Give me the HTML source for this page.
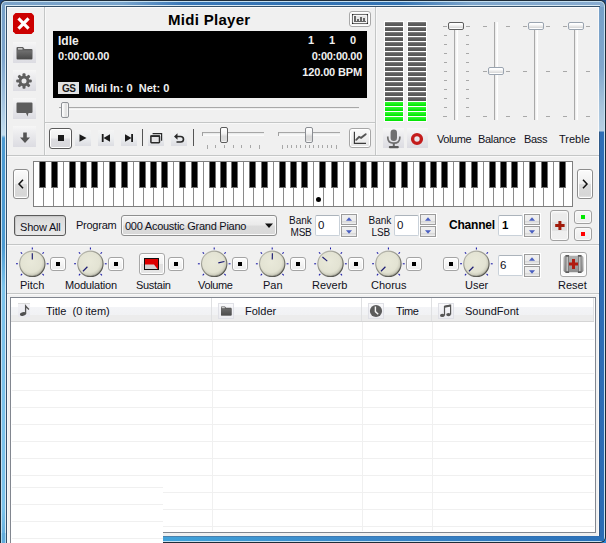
<!DOCTYPE html>
<html><head><meta charset="utf-8">
<style>
*{box-sizing:border-box;margin:0;padding:0}
html,body{width:606px;height:543px;overflow:hidden;background:#f0f0f0}
body{position:relative;font-family:"Liberation Sans",sans-serif;font-size:11px;color:#000}
.a{position:absolute}
.t{position:absolute;white-space:nowrap;line-height:1}
.hl{position:absolute;height:1px;background:#c4c6c6}
.vl{position:absolute;width:1px;background:#c4c6c6}
.sbtn{position:absolute;width:23px;height:21px;background:linear-gradient(#f6f6f6,#e9e9ec 45%,#dcdce2)}
.tb{position:absolute;width:16px;height:16px;background:linear-gradient(#f4f4f4,#eceef0 50%,#dcdde2)}
.rb{position:absolute;border:1px solid #9a9a9a;border-radius:3px;background:linear-gradient(#fbfbfb,#f1f1f1 50%,#e4e4e4 51%,#dedede)}
.vu{position:absolute;width:20px;height:101px;background:#fff}
.seg{position:absolute;left:1px;width:18px;height:4px;background:linear-gradient(#8a8a8a,#5c5c5c 40%,#585858)}
.seg.g{background:linear-gradient(#30ff30,#00e000)}
.groove{position:absolute;width:4px;background:linear-gradient(90deg,#a9a9a9 0,#a9a9a9 1px,#e6e6e6 1px,#fff 3px,#fff)}
.vh{position:absolute;width:16px;height:8px;border:1px solid #8a8d90;border-radius:2px;background:linear-gradient(#fff,#fff 20%,#e5e5e5 60%,#d9d9d9 80%,#fff 81%)}
.tk{position:absolute;height:1px;background:#a8a8a8}
.lbl{position:absolute;white-space:nowrap;line-height:1;font-size:11px;color:#101020}
</style></head><body>

<!-- ===== window frame ===== -->
<div class="a" style="left:0;top:0;width:606px;height:10px;background:#24508a"></div>
<div class="a" style="left:596px;top:533px;width:10px;height:10px;background:#2a88d8"></div>
<div class="a" style="left:0;top:0;width:606px;height:543px;background:#1e2c38;border-radius:6px 6px 6px 0"></div>
<div class="a" style="left:1px;top:1px;width:604px;height:541px;background:#c6e0f0;border-radius:5px 5px 5px 0"></div>
<div class="a" style="left:2px;top:2px;width:602px;height:539px;border-radius:4px 4px 4px 0;background:linear-gradient(90deg,#7aa2c8 0,#78a4cc 20%,#3a78b8 30%,#3272b2 50%,#3474b4 66%,#7ea6cc 78%,#88acd0 100%)"></div>
<!-- left side strip colours -->
<div class="a" style="left:2px;top:7px;width:3px;height:534px;background:linear-gradient(#76a0c8 0,#7ca4cc 50px,#a4c4e0 95px,#c4def0 128px,#4b9ad2 131px,#4b9ad2 240px,#7cc4ec 280px,#7cc4ec 500px,#62acdc 534px)"></div>
<!-- right side strip -->
<div class="a" style="left:600px;top:7px;width:4px;height:534px;background:linear-gradient(#76a0c8 0,#80a6cc 60px,#a8c4dc 100px,#b8d0e4 124px,#2e6eb6 125px,#2c6cb4 534px)"></div>
<!-- bottom strip -->
<div class="a" style="left:2px;top:537px;width:602px;height:4px;background:linear-gradient(90deg,#58b0e0,#40a0d8 30%,#3a86c8 60%,#2a70b8)"></div>
<div class="a" style="left:5px;top:5px;width:595px;height:532px;background:#d8eaf4"></div>
<div class="a" style="left:6px;top:6px;width:594px;height:531px;background:#34506a"></div>
<div class="a" style="left:7px;top:7px;width:592px;height:529px;background:#f0f0f0;border-top:1px solid #fbfbfb;border-left:1px solid #f8f8f8;border-right:1px solid #fafafa"></div>

<div class="a" style="left:599px;top:7px;width:1px;height:530px;background:linear-gradient(#76a0c8 0,#80a6cc 60px,#a8c4dc 100px,#b8d0e4 124px,#2f5a8a 125px,#2a5486)"></div>
<div class="a" style="left:163px;top:536px;width:437px;height:1px;background:linear-gradient(90deg,#4a82ac,#3a78b4 50%,#2c6cb2)"></div>
<!-- ===== left sidebar ===== -->
<div class="vl" style="left:44px;top:7px;height:148px"></div>
<div class="a" style="left:45px;top:7px;width:1px;height:148px;background:#f8f8f8"></div>
<svg class="a" style="left:13px;top:13px" width="21" height="21" viewBox="0 0 21 21">
 <path d="M2.5 0H18.5L21 2.5V18.5L18.5 21H2.5L0 18.5V2.5Z" fill="#cc0000"/>
 <path d="M6.6 6.6L14.4 14.4M14.4 6.6L6.6 14.4" stroke="#fff" stroke-width="3.2" stroke-linecap="square"/>
</svg>
<div class="sbtn" style="left:13px;top:42px"></div>
<svg class="a" style="left:16px;top:46px" width="17" height="14" viewBox="0 0 17 14">
 <path d="M1.5 1H7L8.5 3H15.5Q16.5 3 16.5 4V12.5Q16.5 13.5 15.5 13.5H1.5Q0.5 13.5 0.5 12.5V2Q0.5 1 1.5 1Z" fill="#5e5e5e"/>
 <rect x="2" y="2.2" width="4.5" height="1.3" fill="#ddd"/>
 <rect x="1" y="4.5" width="15" height="8.5" fill="url(#fg)"/>
 <defs><linearGradient id="fg" x1="0" y1="0" x2="0" y2="1"><stop offset="0" stop-color="#707070"/><stop offset="1" stop-color="#4a4a4a"/></linearGradient></defs>
</svg>
<div class="sbtn" style="left:13px;top:70px"></div>
<svg class="a" style="left:15px;top:72px" width="18" height="18" viewBox="0 0 18 18">
 <g fill="#5e5e5e" transform="translate(9,9)">
  <circle r="5.4"/>
  <rect x="-1.5" y="-7.8" width="3" height="15.6" rx="1"/>
  <rect x="-1.5" y="-7.8" width="3" height="15.6" rx="1" transform="rotate(45)"/>
  <rect x="-1.5" y="-7.8" width="3" height="15.6" rx="1" transform="rotate(90)"/>
  <rect x="-1.5" y="-7.8" width="3" height="15.6" rx="1" transform="rotate(135)"/>
 </g>
 <circle cx="9" cy="9" r="2.5" fill="#eaeaec"/>
</svg>
<div class="sbtn" style="left:13px;top:98px"></div>
<svg class="a" style="left:16px;top:102px" width="17" height="15" viewBox="0 0 17 15">
 <path d="M1.5 0.5H15.5Q16.5 0.5 16.5 1.5V10Q16.5 11 15.5 11H12.5L11.5 14.5L10 11H1.5Q0.5 11 0.5 10V1.5Q0.5 0.5 1.5 0.5Z" fill="#5c5c5c"/>
</svg>
<div class="sbtn" style="left:13px;top:126px"></div>
<svg class="a" style="left:19px;top:132px" width="12" height="12" viewBox="0 0 12 12">
 <path d="M4.2 0.5H7.8V5.5H11L6 11L1 5.5H4.2Z" fill="#555"/>
</svg>

<!-- ===== top centre ===== -->
<div class="t" style="left:168px;top:12px;font-size:15px;font-weight:bold;color:#000;letter-spacing:0.3px">Midi Player</div>
<div class="rb" style="left:349px;top:11px;width:22px;height:16px;border-color:#a8a8a8;background:#f4f4f4;box-shadow:inset 0 0 0 1px #fff"></div>
<svg class="a" style="left:352px;top:14px" width="16" height="10" viewBox="0 0 16 10">
 <rect x="0.5" y="0.5" width="15" height="9" fill="#e6e6e6" stroke="#707070" stroke-width="1"/>
 <rect x="1.5" y="1.5" width="13" height="7" fill="none" stroke="#f6f6f6" stroke-width="1"/>
 <rect x="0" y="0" width="1.2" height="1.2" fill="#222"/><rect x="14.8" y="0" width="1.2" height="1.2" fill="#222"/>
 <rect x="0" y="8.8" width="1.2" height="1.2" fill="#222"/><rect x="14.8" y="8.8" width="1.2" height="1.2" fill="#222"/>
 <rect x="2" y="2" width="2" height="6" fill="#666"/>
 <rect x="5" y="5" width="2" height="3" fill="#666"/>
 <rect x="8" y="3" width="2" height="5" fill="#666"/>
 <rect x="11" y="4" width="2" height="4" fill="#666"/>
 <rect x="2" y="7" width="12" height="1" fill="#666"/>
</svg>

<!-- display -->
<div class="a" style="left:53px;top:31px;width:314px;height:67px;background:#000"></div>
<div class="t" id="idle" style="left:58px;top:35px;font-size:12px;font-weight:bold;color:#f0f0f0">Idle</div>
<div class="t" style="left:58px;top:51px;font-size:11px;font-weight:bold;color:#f0f0f0;letter-spacing:-0.2px">0:00:00.00</div>
<div class="a" style="left:58px;top:82px;width:21px;height:12px;background:#e2e2e2"></div>
<div class="t" style="left:62px;top:83.6px;font-size:10px;font-weight:bold;color:#1a1a1a;letter-spacing:-0.5px">GS</div>
<div class="t" style="left:85px;top:83px;font-size:11px;font-weight:bold;color:#f0f0f0">Midi In: 0&nbsp;&nbsp;Net: 0</div>
<div class="t" style="left:308px;top:35px;font-size:11px;font-weight:bold;color:#f0f0f0">1</div>
<div class="t" style="left:329px;top:35px;font-size:11px;font-weight:bold;color:#f0f0f0">1</div>
<div class="t" style="left:350px;top:35px;font-size:11px;font-weight:bold;color:#f0f0f0">0</div>
<div class="t" style="right:244px;top:51px;font-size:11px;font-weight:bold;color:#f0f0f0;letter-spacing:-0.3px">0:00:00.00</div>
<div class="t" style="right:244px;top:67px;font-size:11px;font-weight:bold;color:#f0f0f0;letter-spacing:-0.15px">120.00 BPM</div>

<!-- position slider -->
<div class="a" style="left:59px;top:107px;width:300px;height:3px;background:linear-gradient(#a8a8a8 0,#a8a8a8 1px,#e8e8e8 1px,#fff)"></div>
<div class="a" style="left:61px;top:102px;width:8px;height:16px;border:1px solid #8e9196;border-radius:2px;background:linear-gradient(90deg,#fff,#f4f4f4 30%,#dcdcdc 70%,#fff)"></div>

<div class="hl" style="left:45px;top:122px;width:330px"></div>
<div class="a" style="left:45px;top:123px;width:330px;height:1px;background:#f8f8f8"></div>
<div class="vl" style="left:375px;top:7px;height:148px"></div>
<div class="a" style="left:376px;top:7px;width:1px;height:148px;background:#f8f8f8"></div>


<!-- ===== transport row ===== -->
<div class="a" style="left:49px;top:128px;width:23px;height:21px;border:1px solid #5a5a5a;border-radius:3px;background:linear-gradient(#f8f8f8,#eeeeee 45%,#dcdce0 55%,#d8d8dc);box-shadow:inset 0 0 0 1px #fff"></div>
<div class="a" style="left:58px;top:135px;width:6px;height:6px;background:#1a1a1a"></div>
<div class="tb" style="left:75px;top:130px"></div>
<svg class="a" style="left:79px;top:134px" width="8" height="8" viewBox="0 0 8 8"><path d="M0.5 0.2L7.5 4L0.5 7.8Z" fill="#1c1c1c"/></svg>
<div class="tb" style="left:98px;top:130px"></div>
<svg class="a" style="left:101px;top:134px" width="10" height="8" viewBox="0 0 10 8"><rect x="0.8" y="0" width="1.8" height="8" fill="#1c1c1c"/><path d="M9 0.2L2.5 4L9 7.8Z" fill="#1c1c1c"/></svg>
<div class="tb" style="left:121px;top:130px"></div>
<svg class="a" style="left:124px;top:134px" width="10" height="8" viewBox="0 0 10 8"><rect x="7.2" y="0" width="1.8" height="8" fill="#1c1c1c"/><path d="M1 0.2L7.5 4L1 7.8Z" fill="#1c1c1c"/></svg>
<div class="a" style="left:142px;top:129px;width:1px;height:17px;background:#555"></div>
<div class="tb" style="left:148px;top:130px"></div>
<svg class="a" style="left:150px;top:132px" width="13" height="12" viewBox="0 0 13 12"><path d="M2.6 1.6H11.6V8.8" fill="none" stroke="#2a2a2a" stroke-width="1.2"/><rect x="0.9" y="3.9" width="8.6" height="6.8" rx="0.6" fill="#e4e4e6" stroke="#2a2a2a" stroke-width="1.5"/><rect x="0.5" y="3.4" width="9.4" height="1.6" fill="#2a2a2a"/></svg>
<div class="tb" style="left:171px;top:130px"></div>
<svg class="a" style="left:173px;top:132px" width="12" height="12" viewBox="0 0 12 12"><path d="M4 4.5H7.5Q10.5 4.5 10.5 7.2Q10.5 10 7.5 10H3.5" fill="none" stroke="#2a2a2a" stroke-width="1.6"/><path d="M1 4.5L4.5 1.2V7.8Z" fill="#2a2a2a"/></svg>
<div class="a" style="left:193px;top:129px;width:1px;height:17px;background:#555"></div>

<!-- speed slider -->
<div class="a" style="left:202px;top:132px;width:62px;height:4px;border-left:1px solid #a0a0a0;background:linear-gradient(#a6a6a6 0,#a6a6a6 1px,#e4e6e6 1px,#fafafa 3px)"></div>
<div class="a" style="left:220px;top:127px;width:8px;height:16px;border:1px solid #5c5c5c;border-radius:2px;background:linear-gradient(#fff,#f2f2f2 40%,#d8d8d8 60%,#dcdcdc 90%,#fff)"></div>
<div class="a" style="left:207px;top:145px;width:1px;height:4px;background:#a8a8a8"></div>
<div class="a" style="left:215px;top:145px;width:1px;height:3px;background:#a8a8a8"></div>
<div class="a" style="left:224px;top:145px;width:1px;height:3px;background:#a8a8a8"></div>
<div class="a" style="left:233px;top:145px;width:1px;height:3px;background:#a8a8a8"></div>
<div class="a" style="left:241px;top:145px;width:1px;height:3px;background:#a8a8a8"></div>
<div class="a" style="left:250px;top:145px;width:1px;height:3px;background:#a8a8a8"></div>
<div class="a" style="left:259px;top:145px;width:1px;height:4px;background:#a8a8a8"></div>
<!-- pitch slider -->
<div class="a" style="left:278px;top:132px;width:62px;height:4px;border-left:1px solid #a0a0a0;background:linear-gradient(#a6a6a6 0,#a6a6a6 1px,#e4e6e6 1px,#fafafa 3px)"></div>
<div class="a" style="left:305px;top:127px;width:8px;height:16px;border:1px solid #8a8d92;border-radius:2px;background:linear-gradient(#fff,#f2f2f2 40%,#d8d8d8 60%,#dcdcdc 90%,#fff)"></div>
<div class="a" style="left:282px;top:145px;width:1px;height:4px;background:#a8a8a8"></div>
<div class="a" style="left:287px;top:145px;width:1px;height:3px;background:#a8a8a8"></div>
<div class="a" style="left:291px;top:145px;width:1px;height:3px;background:#a8a8a8"></div>
<div class="a" style="left:296px;top:145px;width:1px;height:3px;background:#a8a8a8"></div>
<div class="a" style="left:300px;top:145px;width:1px;height:3px;background:#a8a8a8"></div>
<div class="a" style="left:305px;top:145px;width:1px;height:3px;background:#a8a8a8"></div>
<div class="a" style="left:309px;top:145px;width:1px;height:3px;background:#a8a8a8"></div>
<div class="a" style="left:313px;top:145px;width:1px;height:3px;background:#a8a8a8"></div>
<div class="a" style="left:318px;top:145px;width:1px;height:3px;background:#a8a8a8"></div>
<div class="a" style="left:322px;top:145px;width:1px;height:3px;background:#a8a8a8"></div>
<div class="a" style="left:327px;top:145px;width:1px;height:3px;background:#a8a8a8"></div>
<div class="a" style="left:331px;top:145px;width:1px;height:3px;background:#a8a8a8"></div>
<div class="a" style="left:336px;top:145px;width:1px;height:4px;background:#a8a8a8"></div>

<div class="rb" style="left:349px;top:128px;width:22px;height:20px;border-color:#a6a6a6;background:linear-gradient(#fafafa,#f0f0f0 50%,#e6e6e6);box-shadow:inset 0 0 0 1px #fff"></div>
<svg class="a" style="left:352px;top:131px" width="16" height="14" viewBox="0 0 16 14"><path d="M2.4 0.8V12.4H14" fill="none" stroke="#3a3a3a" stroke-width="1.2"/><path d="M4.2 8.8L7.1 5.8L9.1 6.8L13.7 3.2" fill="none" stroke="#555" stroke-width="1.9" stroke-linecap="round"/></svg>

<div class="hl" style="left:7px;top:155px;width:592px"></div>
<div class="a" style="left:7px;top:156px;width:592px;height:1px;background:#f9f9f9"></div>

<!-- ===== right top: VU + sliders ===== -->
<div class="vu" style="left:384px;top:21px"><div class="seg" style="top:1px"></div><div class="seg" style="top:6px"></div><div class="seg" style="top:11px"></div><div class="seg" style="top:16px"></div><div class="seg" style="top:21px"></div><div class="seg" style="top:26px"></div><div class="seg" style="top:31px"></div><div class="seg" style="top:36px"></div><div class="seg" style="top:41px"></div><div class="seg" style="top:46px"></div><div class="seg" style="top:51px"></div><div class="seg" style="top:56px"></div><div class="seg" style="top:61px"></div><div class="seg" style="top:66px"></div><div class="seg" style="top:71px"></div><div class="seg" style="top:76px"></div><div class="seg g" style="top:81px"></div><div class="seg g" style="top:86px"></div><div class="seg g" style="top:91px"></div><div class="seg g" style="top:96px"></div></div>
<div class="vu" style="left:407px;top:21px"><div class="seg" style="top:1px"></div><div class="seg" style="top:6px"></div><div class="seg" style="top:11px"></div><div class="seg" style="top:16px"></div><div class="seg" style="top:21px"></div><div class="seg" style="top:26px"></div><div class="seg" style="top:31px"></div><div class="seg" style="top:36px"></div><div class="seg" style="top:41px"></div><div class="seg" style="top:46px"></div><div class="seg" style="top:51px"></div><div class="seg" style="top:56px"></div><div class="seg" style="top:61px"></div><div class="seg" style="top:66px"></div><div class="seg" style="top:71px"></div><div class="seg" style="top:76px"></div><div class="seg g" style="top:81px"></div><div class="seg g" style="top:86px"></div><div class="seg g" style="top:91px"></div><div class="seg g" style="top:96px"></div></div>
<div class="sbtn" style="left:383px;top:128px;width:21px;height:20px"></div>
<svg class="a" style="left:386px;top:129px" width="16" height="20" viewBox="0 0 16 20">
 <rect x="4.6" y="0.5" width="6.4" height="11.5" rx="3.2" fill="#707070"/>
 <path d="M1.8 7.5V8.8Q1.8 14.2 7.8 14.2Q13.8 14.2 13.8 8.8V7.5" fill="none" stroke="#707070" stroke-width="1.7"/>
 <rect x="6.8" y="14" width="2" height="3.5" fill="#6a6a6a"/>
 <rect x="2.8" y="17" width="10" height="2.2" rx="1" fill="#5a5a5a"/>
</svg>
<div class="sbtn" style="left:407px;top:128px;width:21px;height:20px"></div>
<svg class="a" style="left:410px;top:132px" width="14" height="14" viewBox="0 0 14 14"><circle cx="7" cy="7" r="4.4" fill="none" stroke="#c41c1c" stroke-width="3.4"/></svg>
<div class="groove" style="left:454px;top:22px;height:98px"></div>
<div class="tk" style="left:443px;top:26px;width:4px"></div><div class="tk" style="left:466px;top:26px;width:4px"></div>
<div class="tk" style="left:444px;top:35px;width:3px"></div><div class="tk" style="left:466px;top:35px;width:3px"></div>
<div class="tk" style="left:444px;top:44px;width:3px"></div><div class="tk" style="left:466px;top:44px;width:3px"></div>
<div class="tk" style="left:444px;top:53px;width:3px"></div><div class="tk" style="left:466px;top:53px;width:3px"></div>
<div class="tk" style="left:444px;top:62px;width:3px"></div><div class="tk" style="left:466px;top:62px;width:3px"></div>
<div class="tk" style="left:444px;top:71px;width:3px"></div><div class="tk" style="left:466px;top:71px;width:3px"></div>
<div class="tk" style="left:444px;top:80px;width:3px"></div><div class="tk" style="left:466px;top:80px;width:3px"></div>
<div class="tk" style="left:444px;top:89px;width:3px"></div><div class="tk" style="left:466px;top:89px;width:3px"></div>
<div class="tk" style="left:444px;top:98px;width:3px"></div><div class="tk" style="left:466px;top:98px;width:3px"></div>
<div class="tk" style="left:444px;top:107px;width:3px"></div><div class="tk" style="left:466px;top:107px;width:3px"></div>
<div class="tk" style="left:443px;top:116px;width:4px"></div><div class="tk" style="left:466px;top:116px;width:4px"></div>
<div class="vh" style="left:448px;top:22px;border-color:#5e5e5e"></div>
<div class="groove" style="left:494px;top:22px;height:98px"></div>
<div class="tk" style="left:483px;top:26px;width:4px"></div><div class="tk" style="left:506px;top:26px;width:4px"></div>
<div class="tk" style="left:483px;top:71px;width:4px"></div><div class="tk" style="left:506px;top:71px;width:4px"></div>
<div class="tk" style="left:483px;top:116px;width:4px"></div><div class="tk" style="left:506px;top:116px;width:4px"></div>
<div class="vh" style="left:488px;top:67px;border-color:#9aa4b0"></div>
<div class="groove" style="left:534px;top:22px;height:98px"></div>
<div class="tk" style="left:523px;top:26px;width:4px"></div><div class="tk" style="left:546px;top:26px;width:4px"></div>
<div class="tk" style="left:523px;top:71px;width:4px"></div><div class="tk" style="left:546px;top:71px;width:4px"></div>
<div class="tk" style="left:523px;top:116px;width:4px"></div><div class="tk" style="left:546px;top:116px;width:4px"></div>
<div class="vh" style="left:528px;top:22px;border-color:#9aa4b0"></div>
<div class="groove" style="left:574px;top:22px;height:98px"></div>
<div class="tk" style="left:563px;top:26px;width:4px"></div><div class="tk" style="left:586px;top:26px;width:4px"></div>
<div class="tk" style="left:563px;top:71px;width:4px"></div><div class="tk" style="left:586px;top:71px;width:4px"></div>
<div class="tk" style="left:563px;top:116px;width:4px"></div><div class="tk" style="left:586px;top:116px;width:4px"></div>
<div class="vh" style="left:568px;top:22px;border-color:#9aa4b0"></div>

<div class="lbl" style="left:437px;top:134px;letter-spacing:-0.4px">Volume</div>
<div class="lbl" style="left:478px;top:134px;letter-spacing:-0.3px">Balance</div>
<div class="lbl" style="left:524px;top:134px;letter-spacing:-0.3px">Bass</div>
<div class="lbl" style="left:559px;top:134px">Treble</div>


<!-- ===== piano row ===== -->
<div class="rb" style="left:13px;top:169px;width:16px;height:30px;border-color:#8c8c8c;background:linear-gradient(#fbfbfb,#efefef 48%,#dcdcdc 52%,#d6d6d6 90%,#e8e8e8);box-shadow:inset 0 0 0 1px #fff"></div>
<svg class="a" style="left:17px;top:179px" width="8" height="10" viewBox="0 0 8 10"><path d="M6 0.8L2 5L6 9.2" fill="none" stroke="#111" stroke-width="1.5"/></svg>
<div class="rb" style="left:577px;top:169px;width:16px;height:30px;border-color:#8c8c8c;background:linear-gradient(#fbfbfb,#efefef 48%,#dcdcdc 52%,#d6d6d6 90%,#e8e8e8);box-shadow:inset 0 0 0 1px #fff"></div>
<svg class="a" style="left:581px;top:179px" width="8" height="10" viewBox="0 0 8 10"><path d="M2 0.8L6 5L2 9.2" fill="none" stroke="#111" stroke-width="1.5"/></svg>
<div class="a" style="left:33px;top:161px;width:540px;height:46px;background:#fff;border:1px solid #7e7e7e"></div>
<div class="a" style="left:43px;top:162px;width:1px;height:44px;background:#8a8a8a"></div><div class="a" style="left:53px;top:162px;width:1px;height:44px;background:#8a8a8a"></div><div class="a" style="left:63px;top:162px;width:1px;height:44px;background:#8a8a8a"></div><div class="a" style="left:73px;top:162px;width:1px;height:44px;background:#8a8a8a"></div><div class="a" style="left:83px;top:162px;width:1px;height:44px;background:#8a8a8a"></div><div class="a" style="left:93px;top:162px;width:1px;height:44px;background:#8a8a8a"></div><div class="a" style="left:103px;top:162px;width:1px;height:44px;background:#8a8a8a"></div><div class="a" style="left:113px;top:162px;width:1px;height:44px;background:#8a8a8a"></div><div class="a" style="left:123px;top:162px;width:1px;height:44px;background:#8a8a8a"></div><div class="a" style="left:133px;top:162px;width:1px;height:44px;background:#8a8a8a"></div><div class="a" style="left:143px;top:162px;width:1px;height:44px;background:#8a8a8a"></div><div class="a" style="left:153px;top:162px;width:1px;height:44px;background:#8a8a8a"></div><div class="a" style="left:163px;top:162px;width:1px;height:44px;background:#8a8a8a"></div><div class="a" style="left:173px;top:162px;width:1px;height:44px;background:#8a8a8a"></div><div class="a" style="left:183px;top:162px;width:1px;height:44px;background:#8a8a8a"></div><div class="a" style="left:193px;top:162px;width:1px;height:44px;background:#8a8a8a"></div><div class="a" style="left:203px;top:162px;width:1px;height:44px;background:#8a8a8a"></div><div class="a" style="left:213px;top:162px;width:1px;height:44px;background:#8a8a8a"></div><div class="a" style="left:223px;top:162px;width:1px;height:44px;background:#8a8a8a"></div><div class="a" style="left:233px;top:162px;width:1px;height:44px;background:#8a8a8a"></div><div class="a" style="left:243px;top:162px;width:1px;height:44px;background:#8a8a8a"></div><div class="a" style="left:253px;top:162px;width:1px;height:44px;background:#8a8a8a"></div><div class="a" style="left:263px;top:162px;width:1px;height:44px;background:#8a8a8a"></div><div class="a" style="left:273px;top:162px;width:1px;height:44px;background:#8a8a8a"></div><div class="a" style="left:283px;top:162px;width:1px;height:44px;background:#8a8a8a"></div><div class="a" style="left:293px;top:162px;width:1px;height:44px;background:#8a8a8a"></div><div class="a" style="left:303px;top:162px;width:1px;height:44px;background:#8a8a8a"></div><div class="a" style="left:313px;top:162px;width:1px;height:44px;background:#8a8a8a"></div><div class="a" style="left:323px;top:162px;width:1px;height:44px;background:#8a8a8a"></div><div class="a" style="left:333px;top:162px;width:1px;height:44px;background:#8a8a8a"></div><div class="a" style="left:343px;top:162px;width:1px;height:44px;background:#8a8a8a"></div><div class="a" style="left:353px;top:162px;width:1px;height:44px;background:#8a8a8a"></div><div class="a" style="left:363px;top:162px;width:1px;height:44px;background:#8a8a8a"></div><div class="a" style="left:373px;top:162px;width:1px;height:44px;background:#8a8a8a"></div><div class="a" style="left:383px;top:162px;width:1px;height:44px;background:#8a8a8a"></div><div class="a" style="left:393px;top:162px;width:1px;height:44px;background:#8a8a8a"></div><div class="a" style="left:403px;top:162px;width:1px;height:44px;background:#8a8a8a"></div><div class="a" style="left:413px;top:162px;width:1px;height:44px;background:#8a8a8a"></div><div class="a" style="left:423px;top:162px;width:1px;height:44px;background:#8a8a8a"></div><div class="a" style="left:433px;top:162px;width:1px;height:44px;background:#8a8a8a"></div><div class="a" style="left:443px;top:162px;width:1px;height:44px;background:#8a8a8a"></div><div class="a" style="left:453px;top:162px;width:1px;height:44px;background:#8a8a8a"></div><div class="a" style="left:463px;top:162px;width:1px;height:44px;background:#8a8a8a"></div><div class="a" style="left:473px;top:162px;width:1px;height:44px;background:#8a8a8a"></div><div class="a" style="left:483px;top:162px;width:1px;height:44px;background:#8a8a8a"></div><div class="a" style="left:493px;top:162px;width:1px;height:44px;background:#8a8a8a"></div><div class="a" style="left:503px;top:162px;width:1px;height:44px;background:#8a8a8a"></div><div class="a" style="left:513px;top:162px;width:1px;height:44px;background:#8a8a8a"></div><div class="a" style="left:523px;top:162px;width:1px;height:44px;background:#8a8a8a"></div><div class="a" style="left:533px;top:162px;width:1px;height:44px;background:#8a8a8a"></div><div class="a" style="left:543px;top:162px;width:1px;height:44px;background:#8a8a8a"></div><div class="a" style="left:553px;top:162px;width:1px;height:44px;background:#8a8a8a"></div><div class="a" style="left:563px;top:162px;width:1px;height:44px;background:#8a8a8a"></div>
<div class="a" style="left:39px;top:162px;width:7px;height:26px;background:#000;border:1px solid #707070;border-top:none"></div><div class="a" style="left:51px;top:162px;width:7px;height:26px;background:#000;border:1px solid #707070;border-top:none"></div><div class="a" style="left:69px;top:162px;width:7px;height:26px;background:#000;border:1px solid #707070;border-top:none"></div><div class="a" style="left:80px;top:162px;width:7px;height:26px;background:#000;border:1px solid #707070;border-top:none"></div><div class="a" style="left:91px;top:162px;width:7px;height:26px;background:#000;border:1px solid #707070;border-top:none"></div><div class="a" style="left:109px;top:162px;width:7px;height:26px;background:#000;border:1px solid #707070;border-top:none"></div><div class="a" style="left:121px;top:162px;width:7px;height:26px;background:#000;border:1px solid #707070;border-top:none"></div><div class="a" style="left:139px;top:162px;width:7px;height:26px;background:#000;border:1px solid #707070;border-top:none"></div><div class="a" style="left:150px;top:162px;width:7px;height:26px;background:#000;border:1px solid #707070;border-top:none"></div><div class="a" style="left:161px;top:162px;width:7px;height:26px;background:#000;border:1px solid #707070;border-top:none"></div><div class="a" style="left:179px;top:162px;width:7px;height:26px;background:#000;border:1px solid #707070;border-top:none"></div><div class="a" style="left:191px;top:162px;width:7px;height:26px;background:#000;border:1px solid #707070;border-top:none"></div><div class="a" style="left:209px;top:162px;width:7px;height:26px;background:#000;border:1px solid #707070;border-top:none"></div><div class="a" style="left:220px;top:162px;width:7px;height:26px;background:#000;border:1px solid #707070;border-top:none"></div><div class="a" style="left:231px;top:162px;width:7px;height:26px;background:#000;border:1px solid #707070;border-top:none"></div><div class="a" style="left:249px;top:162px;width:7px;height:26px;background:#000;border:1px solid #707070;border-top:none"></div><div class="a" style="left:261px;top:162px;width:7px;height:26px;background:#000;border:1px solid #707070;border-top:none"></div><div class="a" style="left:279px;top:162px;width:7px;height:26px;background:#000;border:1px solid #707070;border-top:none"></div><div class="a" style="left:290px;top:162px;width:7px;height:26px;background:#000;border:1px solid #707070;border-top:none"></div><div class="a" style="left:301px;top:162px;width:7px;height:26px;background:#000;border:1px solid #707070;border-top:none"></div><div class="a" style="left:319px;top:162px;width:7px;height:26px;background:#000;border:1px solid #707070;border-top:none"></div><div class="a" style="left:331px;top:162px;width:7px;height:26px;background:#000;border:1px solid #707070;border-top:none"></div><div class="a" style="left:349px;top:162px;width:7px;height:26px;background:#000;border:1px solid #707070;border-top:none"></div><div class="a" style="left:360px;top:162px;width:7px;height:26px;background:#000;border:1px solid #707070;border-top:none"></div><div class="a" style="left:371px;top:162px;width:7px;height:26px;background:#000;border:1px solid #707070;border-top:none"></div><div class="a" style="left:389px;top:162px;width:7px;height:26px;background:#000;border:1px solid #707070;border-top:none"></div><div class="a" style="left:401px;top:162px;width:7px;height:26px;background:#000;border:1px solid #707070;border-top:none"></div><div class="a" style="left:419px;top:162px;width:7px;height:26px;background:#000;border:1px solid #707070;border-top:none"></div><div class="a" style="left:430px;top:162px;width:7px;height:26px;background:#000;border:1px solid #707070;border-top:none"></div><div class="a" style="left:441px;top:162px;width:7px;height:26px;background:#000;border:1px solid #707070;border-top:none"></div><div class="a" style="left:459px;top:162px;width:7px;height:26px;background:#000;border:1px solid #707070;border-top:none"></div><div class="a" style="left:471px;top:162px;width:7px;height:26px;background:#000;border:1px solid #707070;border-top:none"></div><div class="a" style="left:489px;top:162px;width:7px;height:26px;background:#000;border:1px solid #707070;border-top:none"></div><div class="a" style="left:500px;top:162px;width:7px;height:26px;background:#000;border:1px solid #707070;border-top:none"></div><div class="a" style="left:511px;top:162px;width:7px;height:26px;background:#000;border:1px solid #707070;border-top:none"></div><div class="a" style="left:529px;top:162px;width:7px;height:26px;background:#000;border:1px solid #707070;border-top:none"></div><div class="a" style="left:541px;top:162px;width:7px;height:26px;background:#000;border:1px solid #707070;border-top:none"></div><div class="a" style="left:559px;top:162px;width:7px;height:26px;background:#000;border:1px solid #707070;border-top:none"></div>
<div class="a" style="left:316px;top:197px;width:5px;height:5px;border-radius:50%;background:#000"></div>


<!-- ===== program row ===== -->
<div class="a" style="left:14px;top:215px;width:52px;height:21px;border:1px solid #5a5a5a;border-radius:3px;background:linear-gradient(#d4d4d4,#dcdcdc 20%,#e4e4e4 60%,#e8e8e8);box-shadow:inset 1px 1px 0 #c8c8c8"></div>
<div class="lbl" style="left:20px;top:222px;letter-spacing:-0.2px">Show All</div>
<div class="lbl" style="left:76px;top:220px;letter-spacing:-0.25px">Program</div>
<div class="rb" style="left:121px;top:215px;width:156px;height:21px;border-color:#8e8f8f;background:linear-gradient(#f4f4f4,#eaeaea 48%,#dcdcdc 52%,#d8d8d8);box-shadow:inset 0 0 0 1px #fafafa"></div>
<div class="lbl" style="left:125px;top:221px;letter-spacing:-0.25px">000 Acoustic Grand Piano</div>
<svg class="a" style="left:265px;top:223px" width="8" height="6" viewBox="0 0 8 6"><path d="M0 0.5H8L4 5Z" fill="#111"/></svg>

<div class="lbl" style="left:289px;top:216px;font-size:10px">Bank</div>
<div class="lbl" style="left:290.5px;top:228px;font-size:10px;letter-spacing:-0.2px">MSB</div>
<div class="a" style="left:315px;top:215px;width:25px;height:21px;border:1px solid #c9d1d9;border-top-color:#abb3bb;border-radius:2px;background:#fff"></div>
<div class="lbl" style="left:318px;top:220px;font-size:11.5px">0</div>
<div class="a" style="left:341px;top:214px;width:16px;height:11px;border:1px solid #9c9c9c;background:linear-gradient(#f0f0f0,#eaeaea 70%,#d8d8d8 70%,#dedede 80%,#f2f2f2);box-shadow:0 0 0 1px #fff"></div><svg class="a" style="left:346px;top:217px" width="6" height="4" viewBox="0 0 6 4"><path d="M3 0.2L6 3.8H0Z" fill="#4a5fc0"/></svg><div class="a" style="left:341px;top:226px;width:16px;height:11px;border:1px solid #9c9c9c;background:linear-gradient(#f0f0f0,#eaeaea 70%,#d8d8d8 70%,#dedede 80%,#f2f2f2);box-shadow:0 0 0 1px #fff"></div><svg class="a" style="left:346px;top:230px" width="6" height="4" viewBox="0 0 6 4"><path d="M0 0.2H6L3 3.8Z" fill="#4a5fc0"/></svg>
<div class="lbl" style="left:368.5px;top:216px;font-size:10px">Bank</div>
<div class="lbl" style="left:371.5px;top:228px;font-size:10px;letter-spacing:-0.1px">LSB</div>
<div class="a" style="left:394px;top:215px;width:25px;height:21px;border:1px solid #c9d1d9;border-top-color:#abb3bb;border-radius:2px;background:#fff"></div>
<div class="lbl" style="left:397px;top:220px;font-size:11.5px">0</div>
<div class="a" style="left:420px;top:214px;width:16px;height:11px;border:1px solid #9c9c9c;background:linear-gradient(#f0f0f0,#eaeaea 70%,#d8d8d8 70%,#dedede 80%,#f2f2f2);box-shadow:0 0 0 1px #fff"></div><svg class="a" style="left:425px;top:217px" width="6" height="4" viewBox="0 0 6 4"><path d="M3 0.2L6 3.8H0Z" fill="#4a5fc0"/></svg><div class="a" style="left:420px;top:226px;width:16px;height:11px;border:1px solid #9c9c9c;background:linear-gradient(#f0f0f0,#eaeaea 70%,#d8d8d8 70%,#dedede 80%,#f2f2f2);box-shadow:0 0 0 1px #fff"></div><svg class="a" style="left:425px;top:230px" width="6" height="4" viewBox="0 0 6 4"><path d="M0 0.2H6L3 3.8Z" fill="#4a5fc0"/></svg>
<div class="t" style="left:449px;top:219px;font-size:12px;font-weight:bold;color:#000;letter-spacing:-0.2px">Channel</div>
<div class="a" style="left:498px;top:215px;width:25px;height:21px;border:1px solid #c9d1d9;border-top-color:#abb3bb;border-radius:2px;background:#fff"></div>
<div class="t" style="left:502px;top:219.5px;font-size:11.5px;font-weight:bold;color:#000">1</div>
<div class="a" style="left:524px;top:214px;width:16px;height:11px;border:1px solid #9c9c9c;background:linear-gradient(#f0f0f0,#eaeaea 70%,#d8d8d8 70%,#dedede 80%,#f2f2f2);box-shadow:0 0 0 1px #fff"></div><svg class="a" style="left:529px;top:217px" width="6" height="4" viewBox="0 0 6 4"><path d="M3 0.2L6 3.8H0Z" fill="#4a5fc0"/></svg><div class="a" style="left:524px;top:226px;width:16px;height:11px;border:1px solid #9c9c9c;background:linear-gradient(#f0f0f0,#eaeaea 70%,#d8d8d8 70%,#dedede 80%,#f2f2f2);box-shadow:0 0 0 1px #fff"></div><svg class="a" style="left:529px;top:230px" width="6" height="4" viewBox="0 0 6 4"><path d="M0 0.2H6L3 3.8Z" fill="#4a5fc0"/></svg>
<div class="rb" style="left:550px;top:210px;width:19px;height:31px;border-color:#a0a0a0;background:linear-gradient(#f6f6f6 0,#ebebeb 12%,#ebebeb 38%,#e0e0e0 39%,#e0e0e0 67%,#eeeeee 68%,#efefef);box-shadow:inset 0 0 0 1px #fafafa"></div>
<svg class="a" style="left:554.5px;top:221px" width="10" height="9" viewBox="0 0 10 9"><path d="M3.4 0H6.4V3H9.6V6H6.4V9H3.4V6H0.2V3H3.4Z" fill="#a01a0a"/></svg>
<div class="rb" style="left:574px;top:210px;width:18px;height:14px;border-color:#a0a0a0;background:linear-gradient(#f6f6f6,#ececec);box-shadow:inset 0 0 0 1px #fafafa"></div>
<div class="a" style="left:581px;top:215px;width:4px;height:4px;background:#00e800"></div>
<div class="rb" style="left:574px;top:227px;width:18px;height:14px;border-color:#a0a0a0;background:linear-gradient(#f6f6f6,#ececec);box-shadow:inset 0 0 0 1px #fafafa"></div>
<div class="a" style="left:581px;top:232px;width:4px;height:4px;background:#ff0000"></div>

<div class="hl" style="left:7px;top:244px;width:592px"></div>
<div class="a" style="left:7px;top:245px;width:592px;height:1px;background:#f9f9f9"></div>


<!-- ===== knob row ===== -->
<svg class="a" style="left:0;top:244px" width="606" height="40" viewBox="0 244 606 40">
<defs>
 <radialGradient id="kg" cx="0.45" cy="0.42" r="0.58">
  <stop offset="0" stop-color="#e9e9da"/>
  <stop offset="0.72" stop-color="#e3e3d3"/>
  <stop offset="0.88" stop-color="#d0d0c0"/>
  <stop offset="1" stop-color="#9a9a8e"/>
 </radialGradient>
 <linearGradient id="ks" x1="0.2" y1="0.1" x2="0.8" y2="0.95">
  <stop offset="0" stop-color="#b4b4aa"/>
  <stop offset="0.5" stop-color="#8a8a80"/>
  <stop offset="1" stop-color="#4e4e48"/>
 </linearGradient>
</defs>
<circle cx="32.3" cy="263.8" r="12.7" fill="url(#kg)" stroke="url(#ks)" stroke-width="1.1"/><line x1="32.30" y1="259.60" x2="32.30" y2="253.30" stroke="#1c1c74" stroke-width="1.15"/>
<circle cx="90.4" cy="263.8" r="12.7" fill="url(#kg)" stroke="url(#ks)" stroke-width="1.1"/><line x1="87.43" y1="266.77" x2="82.98" y2="271.22" stroke="#1c1c74" stroke-width="1.15"/>
<circle cx="214.2" cy="263.8" r="12.7" fill="url(#kg)" stroke="url(#ks)" stroke-width="1.1"/><line x1="218.30" y1="262.90" x2="224.46" y2="261.55" stroke="#1c1c74" stroke-width="1.15"/>
<circle cx="272.2" cy="263.8" r="12.7" fill="url(#kg)" stroke="url(#ks)" stroke-width="1.1"/><line x1="272.27" y1="259.60" x2="272.38" y2="253.30" stroke="#1c1c74" stroke-width="1.15"/>
<circle cx="330.5" cy="263.8" r="12.7" fill="url(#kg)" stroke="url(#ks)" stroke-width="1.1"/><line x1="327.28" y1="261.10" x2="322.46" y2="257.05" stroke="#1c1c74" stroke-width="1.15"/>
<circle cx="388.4" cy="263.8" r="12.7" fill="url(#kg)" stroke="url(#ks)" stroke-width="1.1"/><line x1="385.43" y1="266.77" x2="380.98" y2="271.22" stroke="#1c1c74" stroke-width="1.15"/>
<circle cx="476.4" cy="263.8" r="12.7" fill="url(#kg)" stroke="url(#ks)" stroke-width="1.1"/><line x1="473.43" y1="266.77" x2="468.98" y2="271.22" stroke="#1c1c74" stroke-width="1.15"/>

<line x1="22.12" y1="273.98" x2="20.77" y2="275.33" stroke="#1414a4" stroke-width="1.05"/><line x1="17.90" y1="263.80" x2="16.00" y2="263.80" stroke="#1414a4" stroke-width="1.05"/><line x1="22.12" y1="253.62" x2="20.77" y2="252.27" stroke="#1414a4" stroke-width="1.05"/><line x1="32.30" y1="249.40" x2="32.30" y2="247.50" stroke="#1414a4" stroke-width="1.05"/><line x1="42.48" y1="253.62" x2="43.83" y2="252.27" stroke="#1414a4" stroke-width="1.05"/><line x1="46.70" y1="263.80" x2="48.60" y2="263.80" stroke="#1414a4" stroke-width="1.05"/><line x1="42.48" y1="273.98" x2="43.83" y2="275.33" stroke="#1414a4" stroke-width="1.05"/><line x1="80.22" y1="273.98" x2="78.87" y2="275.33" stroke="#1414a4" stroke-width="1.05"/><line x1="76.00" y1="263.80" x2="74.10" y2="263.80" stroke="#1414a4" stroke-width="1.05"/><line x1="80.22" y1="253.62" x2="78.87" y2="252.27" stroke="#1414a4" stroke-width="1.05"/><line x1="90.40" y1="249.40" x2="90.40" y2="247.50" stroke="#1414a4" stroke-width="1.05"/><line x1="100.58" y1="253.62" x2="101.93" y2="252.27" stroke="#1414a4" stroke-width="1.05"/><line x1="104.80" y1="263.80" x2="106.70" y2="263.80" stroke="#1414a4" stroke-width="1.05"/><line x1="100.58" y1="273.98" x2="101.93" y2="275.33" stroke="#1414a4" stroke-width="1.05"/><line x1="204.02" y1="273.98" x2="202.67" y2="275.33" stroke="#1414a4" stroke-width="1.05"/><line x1="199.80" y1="263.80" x2="197.90" y2="263.80" stroke="#1414a4" stroke-width="1.05"/><line x1="204.02" y1="253.62" x2="202.67" y2="252.27" stroke="#1414a4" stroke-width="1.05"/><line x1="214.20" y1="249.40" x2="214.20" y2="247.50" stroke="#1414a4" stroke-width="1.05"/><line x1="224.38" y1="253.62" x2="225.73" y2="252.27" stroke="#1414a4" stroke-width="1.05"/><line x1="228.60" y1="263.80" x2="230.50" y2="263.80" stroke="#1414a4" stroke-width="1.05"/><line x1="224.38" y1="273.98" x2="225.73" y2="275.33" stroke="#1414a4" stroke-width="1.05"/><line x1="262.02" y1="273.98" x2="260.67" y2="275.33" stroke="#1414a4" stroke-width="1.05"/><line x1="257.80" y1="263.80" x2="255.90" y2="263.80" stroke="#1414a4" stroke-width="1.05"/><line x1="262.02" y1="253.62" x2="260.67" y2="252.27" stroke="#1414a4" stroke-width="1.05"/><line x1="272.20" y1="249.40" x2="272.20" y2="247.50" stroke="#1414a4" stroke-width="1.05"/><line x1="282.38" y1="253.62" x2="283.73" y2="252.27" stroke="#1414a4" stroke-width="1.05"/><line x1="286.60" y1="263.80" x2="288.50" y2="263.80" stroke="#1414a4" stroke-width="1.05"/><line x1="282.38" y1="273.98" x2="283.73" y2="275.33" stroke="#1414a4" stroke-width="1.05"/><line x1="320.32" y1="273.98" x2="318.97" y2="275.33" stroke="#1414a4" stroke-width="1.05"/><line x1="316.10" y1="263.80" x2="314.20" y2="263.80" stroke="#1414a4" stroke-width="1.05"/><line x1="320.32" y1="253.62" x2="318.97" y2="252.27" stroke="#1414a4" stroke-width="1.05"/><line x1="330.50" y1="249.40" x2="330.50" y2="247.50" stroke="#1414a4" stroke-width="1.05"/><line x1="340.68" y1="253.62" x2="342.03" y2="252.27" stroke="#1414a4" stroke-width="1.05"/><line x1="344.90" y1="263.80" x2="346.80" y2="263.80" stroke="#1414a4" stroke-width="1.05"/><line x1="340.68" y1="273.98" x2="342.03" y2="275.33" stroke="#1414a4" stroke-width="1.05"/><line x1="378.22" y1="273.98" x2="376.87" y2="275.33" stroke="#1414a4" stroke-width="1.05"/><line x1="374.00" y1="263.80" x2="372.10" y2="263.80" stroke="#1414a4" stroke-width="1.05"/><line x1="378.22" y1="253.62" x2="376.87" y2="252.27" stroke="#1414a4" stroke-width="1.05"/><line x1="388.40" y1="249.40" x2="388.40" y2="247.50" stroke="#1414a4" stroke-width="1.05"/><line x1="398.58" y1="253.62" x2="399.93" y2="252.27" stroke="#1414a4" stroke-width="1.05"/><line x1="402.80" y1="263.80" x2="404.70" y2="263.80" stroke="#1414a4" stroke-width="1.05"/><line x1="398.58" y1="273.98" x2="399.93" y2="275.33" stroke="#1414a4" stroke-width="1.05"/><line x1="466.22" y1="273.98" x2="464.87" y2="275.33" stroke="#1414a4" stroke-width="1.05"/><line x1="462.00" y1="263.80" x2="460.10" y2="263.80" stroke="#1414a4" stroke-width="1.05"/><line x1="466.22" y1="253.62" x2="464.87" y2="252.27" stroke="#1414a4" stroke-width="1.05"/><line x1="476.40" y1="249.40" x2="476.40" y2="247.50" stroke="#1414a4" stroke-width="1.05"/><line x1="486.58" y1="253.62" x2="487.93" y2="252.27" stroke="#1414a4" stroke-width="1.05"/><line x1="490.80" y1="263.80" x2="492.70" y2="263.80" stroke="#1414a4" stroke-width="1.05"/><line x1="486.58" y1="273.98" x2="487.93" y2="275.33" stroke="#1414a4" stroke-width="1.05"/>
</svg>
<div class="rb" style="left:50px;top:257px;width:16px;height:14px;border-color:#a4a4a4;background:linear-gradient(#fdfdfd,#f4f4f4 50%,#ececec);box-shadow:inset 0 0 0 1px #fff"></div><div class="a" style="left:56px;top:262px;width:4px;height:4px;background:#000"></div>
<div class="rb" style="left:108px;top:257px;width:16px;height:14px;border-color:#a4a4a4;background:linear-gradient(#fdfdfd,#f4f4f4 50%,#ececec);box-shadow:inset 0 0 0 1px #fff"></div><div class="a" style="left:114px;top:262px;width:4px;height:4px;background:#000"></div>
<div class="rb" style="left:168px;top:257px;width:16px;height:14px;border-color:#a4a4a4;background:linear-gradient(#fdfdfd,#f4f4f4 50%,#ececec);box-shadow:inset 0 0 0 1px #fff"></div><div class="a" style="left:174px;top:262px;width:4px;height:4px;background:#000"></div>
<div class="rb" style="left:232px;top:257px;width:16px;height:14px;border-color:#a4a4a4;background:linear-gradient(#fdfdfd,#f4f4f4 50%,#ececec);box-shadow:inset 0 0 0 1px #fff"></div><div class="a" style="left:238px;top:262px;width:4px;height:4px;background:#000"></div>
<div class="rb" style="left:290px;top:257px;width:16px;height:14px;border-color:#a4a4a4;background:linear-gradient(#fdfdfd,#f4f4f4 50%,#ececec);box-shadow:inset 0 0 0 1px #fff"></div><div class="a" style="left:296px;top:262px;width:4px;height:4px;background:#000"></div>
<div class="rb" style="left:348px;top:257px;width:16px;height:14px;border-color:#a4a4a4;background:linear-gradient(#fdfdfd,#f4f4f4 50%,#ececec);box-shadow:inset 0 0 0 1px #fff"></div><div class="a" style="left:354px;top:262px;width:4px;height:4px;background:#000"></div>
<div class="rb" style="left:406px;top:257px;width:16px;height:14px;border-color:#a4a4a4;background:linear-gradient(#fdfdfd,#f4f4f4 50%,#ececec);box-shadow:inset 0 0 0 1px #fff"></div><div class="a" style="left:412px;top:262px;width:4px;height:4px;background:#000"></div>
<div class="rb" style="left:443px;top:257px;width:16px;height:14px;border-color:#a4a4a4;background:linear-gradient(#fdfdfd,#f4f4f4 50%,#ececec);box-shadow:inset 0 0 0 1px #fff"></div><div class="a" style="left:449px;top:262px;width:4px;height:4px;background:#000"></div>

<div class="rb" style="left:139px;top:253px;width:26px;height:22px;border-color:#a8a8a8;background:linear-gradient(#fbfbfb,#f1f1f1 50%,#e0e0e0 52%,#e6e6e6);box-shadow:inset 0 0 0 1px #fff"></div>
<svg class="a" style="left:144px;top:258px" width="15" height="12" viewBox="0 0 15 12">
 <rect x="0.5" y="0.5" width="14" height="11" fill="#d4d4d4" stroke="#111" stroke-width="1"/>
 <path d="M1 1H14V11H13.5L10 6.5H1Z" fill="#dd0000"/>
</svg>
<div class="lbl" style="left:20px;top:280px">Pitch</div>
<div class="lbl" style="left:65px;top:280px;letter-spacing:-0.2px">Modulation</div>
<div class="lbl" style="left:136px;top:280px;letter-spacing:-0.3px">Sustain</div>
<div class="lbl" style="left:198px;top:280px;letter-spacing:-0.35px">Volume</div>
<div class="lbl" style="left:263px;top:280px">Pan</div>
<div class="lbl" style="left:312px;top:280px">Reverb</div>
<div class="lbl" style="left:371px;top:280px">Chorus</div>
<div class="lbl" style="left:465px;top:280px">User</div>
<div class="lbl" style="left:558px;top:280px">Reset</div>
<div class="a" style="left:498px;top:255px;width:25px;height:21px;border:1px solid #c9d1d9;border-top-color:#abb3bb;border-radius:2px;background:#fff"></div>
<div class="lbl" style="left:500px;top:260px;font-size:11.5px">6</div>
<div class="a" style="left:524px;top:254px;width:16px;height:11px;border:1px solid #9c9c9c;background:linear-gradient(#f0f0f0,#eaeaea 70%,#d8d8d8 70%,#dedede 80%,#f2f2f2);box-shadow:0 0 0 1px #fff"></div><svg class="a" style="left:529px;top:257px" width="6" height="4" viewBox="0 0 6 4"><path d="M3 0.2L6 3.8H0Z" fill="#4a5fc0"/></svg><div class="a" style="left:524px;top:266px;width:16px;height:11px;border:1px solid #9c9c9c;background:linear-gradient(#f0f0f0,#eaeaea 70%,#d8d8d8 70%,#dedede 80%,#f2f2f2);box-shadow:0 0 0 1px #fff"></div><svg class="a" style="left:529px;top:270px" width="6" height="4" viewBox="0 0 6 4"><path d="M0 0.2H6L3 3.8Z" fill="#4a5fc0"/></svg>
<div class="rb" style="left:560px;top:252px;width:27px;height:25px;border-color:#a8a8a8;background:#fafafa;box-shadow:inset 0 0 0 1px #fff"></div>
<svg class="a" style="left:563px;top:255px" width="21" height="18" viewBox="0 0 21 18">
 <defs><linearGradient id="rg" x1="0" y1="0" x2="0" y2="1"><stop offset="0" stop-color="#b0b0b0"/><stop offset="0.5" stop-color="#a4a4a4"/><stop offset="1" stop-color="#8e8e8e"/></linearGradient></defs>
 <rect x="0.5" y="0.8" width="20" height="16.4" rx="2" fill="url(#rg)"/>
 <rect x="3" y="1" width="2.6" height="16" fill="#c2c2c2" stroke="#707070" stroke-width="0.8"/>
 <rect x="15.4" y="1" width="2.6" height="16" fill="#c2c2c2" stroke="#707070" stroke-width="0.8"/>
 <rect x="2.5" y="0" width="3.6" height="1.6" fill="#5c5c5c"/><rect x="14.9" y="0" width="3.6" height="1.6" fill="#5c5c5c"/>
 <rect x="2.5" y="16.4" width="3.6" height="1.6" fill="#5c5c5c"/><rect x="14.9" y="16.4" width="3.6" height="1.6" fill="#5c5c5c"/>
 <path d="M9 4H12V7.5H15V10.5H12V14H9V10.5H6V7.5H9Z" fill="#b01c10"/>
</svg>

<div class="hl" style="left:7px;top:293px;width:592px"></div>
<div class="a" style="left:7px;top:294px;width:592px;height:1px;background:#f9f9f9"></div>

<!-- ===== list ===== -->
<div class="a" style="left:10px;top:297px;width:586px;height:236px;border:1px solid #828790;background:#fff"></div>
<div class="a" style="left:11px;top:298px;width:583px;height:24px;background:linear-gradient(#ffffff 0,#ffffff 9px,#f3f4f7 9px,#f1f2f4 17px,#ececec 17px,#ececec 23px,#d5d5d5 23px)"></div>
<div class="a" style="left:211px;top:298px;width:1px;height:23px;background:#dfe0e2"></div>
<div class="a" style="left:361px;top:298px;width:1px;height:23px;background:#dfe0e2"></div>
<div class="a" style="left:431px;top:298px;width:1px;height:23px;background:#dfe0e2"></div>
<div class="a" style="left:593px;top:298px;width:1px;height:23px;background:#dfe0e2"></div>
<div class="a" style="left:18px;top:303px;width:12px;height:1px;background:#dcdcdc"></div>
<div class="a" style="left:18px;top:304px;width:12px;height:13px;background:linear-gradient(#f2f2f6,#e8e8ee)"></div>
<svg class="a" style="left:18px;top:304px" width="12" height="13" viewBox="0 0 12 13"><ellipse cx="5" cy="10" rx="3.1" ry="1.9" fill="#505050" transform="rotate(-12 5 10)"/><path d="M7.6 10V2Q8.5 3.2 11 5.4" fill="none" stroke="#555" stroke-width="1.3"/></svg>
<div class="a" style="left:218px;top:303px;width:16px;height:16px;border:1px solid #dfe0e6;background:linear-gradient(#fafafc,#f2f2f6 40%,#ececf0)"></div>
<svg class="a" style="left:220px;top:306px" width="12" height="10" viewBox="0 0 12 10"><path d="M1.5 0.6H5L6 1.8H11Q11.5 1.8 11.5 2.4V8.8Q11.5 9.4 11 9.4H1.5Q1 9.4 1 8.8V1.2Q1 0.6 1.5 0.6Z" fill="#555"/><rect x="1.6" y="1.2" width="3.2" height="1.1" fill="#e6e6e6"/><rect x="1" y="2.6" width="10.5" height="6.8" fill="url(#fgh)"/><defs><linearGradient id="fgh" x1="0" y1="0" x2="0" y2="1"><stop offset="0" stop-color="#6a6a6a"/><stop offset="1" stop-color="#4c4c4c"/></linearGradient></defs></svg>
<div class="a" style="left:368px;top:303px;width:16px;height:16px;border:1px solid #dfe0e6;background:linear-gradient(#fafafc,#f2f2f6 40%,#ececf0)"></div>
<svg class="a" style="left:369px;top:304px" width="14" height="14" viewBox="0 0 14 14"><circle cx="7" cy="7" r="6.1" fill="#5c5c5c"/><path d="M6.4 2.4V7.6L9.2 10.2" fill="none" stroke="#f4f4f4" stroke-width="1.4"/></svg>
<div class="a" style="left:438px;top:303px;width:16px;height:16px;border:1px solid #dfe0e6;background:linear-gradient(#fafafc,#f2f2f6 40%,#ececf0)"></div>
<svg class="a" style="left:439px;top:304px" width="14" height="14" viewBox="0 0 14 14"><path d="M5.5 11.5V2.6L11.6 1.3V10.5" fill="none" stroke="#555" stroke-width="1.2"/><path d="M5.5 2.8L11.6 1.5" stroke="#555" stroke-width="2"/><ellipse cx="3.3" cy="11.4" rx="2.3" ry="1.7" fill="#555"/><ellipse cx="9.5" cy="10.6" rx="2.3" ry="1.7" fill="#555"/></svg>
<div class="lbl" style="left:46px;top:306px">Title&nbsp;&nbsp;(0 item)</div>
<div class="lbl" style="left:245px;top:306px">Folder</div>
<div class="lbl" style="left:396px;top:306px;letter-spacing:-0.4px">Time</div>
<div class="lbl" style="left:465px;top:306px">SoundFont</div>
<div class="a" style="left:12px;top:339px;width:582px;height:1px;background:#f0f0f0"></div><div class="a" style="left:12px;top:356px;width:582px;height:1px;background:#f0f0f0"></div><div class="a" style="left:12px;top:373px;width:582px;height:1px;background:#f0f0f0"></div><div class="a" style="left:12px;top:390px;width:582px;height:1px;background:#f0f0f0"></div><div class="a" style="left:12px;top:407px;width:582px;height:1px;background:#f0f0f0"></div><div class="a" style="left:12px;top:424px;width:582px;height:1px;background:#f0f0f0"></div><div class="a" style="left:12px;top:441px;width:582px;height:1px;background:#f0f0f0"></div><div class="a" style="left:12px;top:458px;width:582px;height:1px;background:#f0f0f0"></div><div class="a" style="left:12px;top:475px;width:582px;height:1px;background:#f0f0f0"></div><div class="a" style="left:12px;top:492px;width:582px;height:1px;background:#f0f0f0"></div><div class="a" style="left:12px;top:509px;width:582px;height:1px;background:#f0f0f0"></div><div class="a" style="left:12px;top:526px;width:582px;height:1px;background:#f0f0f0"></div><div class="a" style="left:212px;top:322px;width:1px;height:209px;background:#f0f0f0"></div><div class="a" style="left:362px;top:322px;width:1px;height:209px;background:#f0f0f0"></div><div class="a" style="left:432px;top:322px;width:1px;height:209px;background:#f0f0f0"></div>
<!-- overlay artifact bottom-left -->
<div class="a" style="left:11px;top:476px;width:152px;height:67px;background:#fff"></div><div class="a" style="left:10px;top:476px;width:1px;height:67px;background:#828790"></div><div class="a" style="left:12px;top:487px;width:151px;height:1px;background:#f0f0f0"></div><div class="a" style="left:12px;top:504px;width:151px;height:1px;background:#f0f0f0"></div><div class="a" style="left:12px;top:521px;width:151px;height:1px;background:#f0f0f0"></div><div class="a" style="left:12px;top:538px;width:151px;height:1px;background:#f0f0f0"></div>


<div class="a" style="left:0;top:533px;width:10px;height:10px;background:linear-gradient(90deg,#1c2a34 0,#1c2a34 1px,#b0dcf0 1px,#b0dcf0 2px,#62acdc 2px,#62acdc 5px,#b0dcf0 5px,#b0dcf0 6px,#34506a 6px,#34506a 7px,#f8f8f8 7px,#f2f2f2 10px)"></div>
<div class="a" style="left:10px;top:533px;width:153px;height:10px;background:#fff;border-left:1px solid #828790"></div>
<div class="a" style="left:12px;top:538px;width:151px;height:1px;background:#f0f0f0"></div>
</body></html>
